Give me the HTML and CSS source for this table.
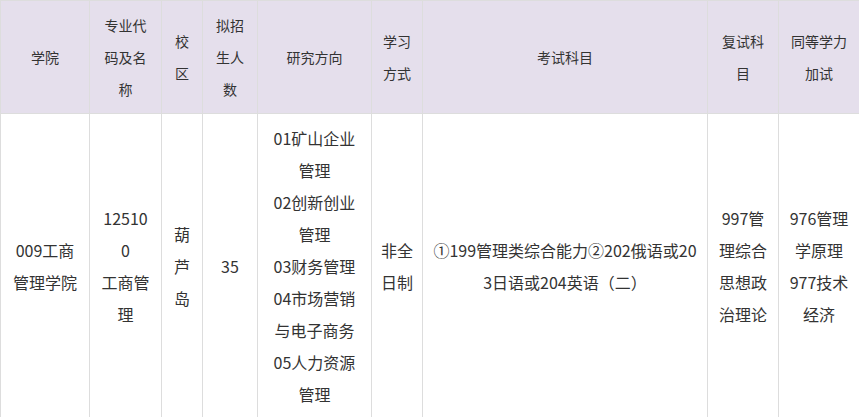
FILE: index.html
```html
<!DOCTYPE html>
<html lang="zh-CN">
<head>
<meta charset="utf-8">
<title>招生目录</title>
<link rel="stylesheet" href="styles.css">
</head>
<body>
<table class="catalog">
  <colgroup>
    <col class="c-college">
    <col class="c-code">
    <col class="c-campus">
    <col class="c-quota">
    <col class="c-dir">
    <col class="c-mode">
    <col class="c-exam">
    <col class="c-retest">
    <col class="c-extra">
  </colgroup>
  <thead>
    <tr class="head-row">
      <th>学院</th>
      <th class="narrow">专业代码及名称</th>
      <th>校区</th>
      <th>拟招生人数</th>
      <th>研究方向</th>
      <th>学习方式</th>
      <th>考试科目</th>
      <th>复试科目</th>
      <th>同等学力加试</th>
    </tr>
  </thead>
  <tbody>
    <tr class="body-row">
      <td>009工商管理学院</td>
      <td class="narrow">
        <p class="line">125100</p>
        <p class="line">工商管理</p>
      </td>
      <td>葫芦岛</td>
      <td>35</td>
      <td>
        <p class="line">01矿山企业管理</p>
        <p class="line">02创新创业管理</p>
        <p class="line">03财务管理</p>
        <p class="line">04市场营销与电子商务</p>
        <p class="line">05人力资源管理</p>
      </td>
      <td>非全日制</td>
      <td>①199管理类综合能力②202俄语或203日语或204英语（二）</td>
      <td>997管理综合思想政治理论</td>
      <td>
        <p class="line">976管理学原理</p>
        <p class="line">977技术经济</p>
      </td>
    </tr>
  </tbody>
</table>
</body>
</html>
```
FILE: styles.css
```css
html, body {
  margin: 0;
  padding: 0;
  overflow: hidden;
  background: #ffffff;
}

.catalog {
  border-collapse: collapse;
  table-layout: fixed;
  width: 859px;
  font-family: "Noto Sans CJK SC", "Microsoft YaHei", sans-serif;
  color: #333333;
}

.c-college { width: 89px; }
.c-code { width: 72px; }
.c-campus { width: 41px; }
.c-quota { width: 55px; }
.c-dir { width: 114px; }
.c-mode { width: 51px; }
.c-exam { width: 285px; }
.c-retest { width: 71px; }
.c-extra { width: 81px; }

.catalog th,
.catalog td {
  border: 1px solid #dddddd;
  padding: 8px;
  text-align: center;
  vertical-align: middle;
  word-break: break-all;
  line-height: 32px;
}

.catalog th.narrow,
.catalog td.narrow {
  padding-left: 11px;
  padding-right: 11px;
}

.catalog th {
  background: #e5dfec;
  font-size: 14px;
  font-weight: normal;
  height: 95px;
}

.catalog td {
  font-size: 16px;
}

.line {
  margin: 0;
}
```
